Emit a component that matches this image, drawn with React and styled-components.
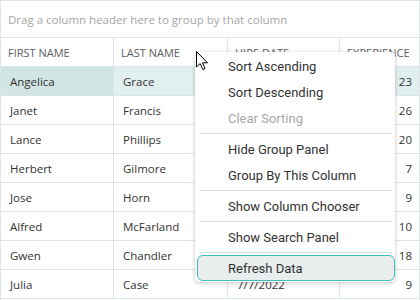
import React from "react";
import styled, { createGlobalStyle } from "styled-components";

const GlobalStyle = createGlobalStyle`
  html, body { margin: 0; padding: 0; background: #fff; overflow: hidden; }
  * { box-sizing: border-box; }
`;

const Grid = styled.div`
  position: relative;
  width: 420px;
  height: 300px;
  border: 1px solid #dde6e6;
  border-bottom: none;
  overflow: hidden;
  font-family: "Open Sans", "Noto Sans", sans-serif;
  font-size: 11.5px;
  color: #333;
`;

const GroupPanel = styled.div`
  height: 37px;
  border-bottom: 1px solid #dde6e6;
  display: flex;
  align-items: center;
  padding-left: 7px;
  color: #a6a6a6;
`;

const Row = styled.div`
  display: grid;
  grid-template-columns: 113px 114px 112px 1fr;
  height: 29px;
  border-bottom: 1px solid #dde6e6;
`;

const Cell = styled.div`
  display: flex;
  align-items: center;
  justify-content: ${(p) => (p.$num ? "flex-end" : "flex-start")};
  padding: 0 7px 0 ${(p) => (p.$header ? 7 : 9)}px;
  border-right: ${(p) => (p.$last ? "none" : "1px solid #dde6e6")};
  background: ${(p) => (p.$focused ? "#d1e5e4" : p.$selected ? "#e1efef" : "transparent")};
  color: ${(p) => (p.$header ? "#5e5e5e" : "#333")};
  font-size: ${(p) => (p.$header ? "11px" : "inherit")};
  white-space: nowrap;
  overflow: hidden;
`;

const Menu = styled.div`
  position: absolute;
  left: 194px;
  top: 51px;
  width: 200px;
  padding: 1px 0;
  background: #fff;
  border-radius: 4px;
  box-shadow: 0 1px 4px rgba(0, 0, 0, 0.22), 0 0 1px rgba(0, 0, 0, 0.15);
  font-family: "Roboto", "Inter", sans-serif;
  font-size: 13px;
`;

const Item = styled.div`
  height: 26px;
  display: flex;
  align-items: center;
  padding-left: ${(p) => (p.$focused ? 30 : 33)}px;
  margin-left: ${(p) => (p.$focused ? 2 : 0)}px;
  color: ${(p) => (p.$disabled ? "#a8a8a8" : "#333")};
  background: ${(p) => (p.$focused ? "#e8eded" : "transparent")};
  border: ${(p) => (p.$focused ? "1px solid #3dbfbf" : "none")};
  border-radius: 6px;
  white-space: nowrap;
`;

const Separator = styled.div`
  height: 1px;
  margin: 2px 2px 2px 4px;
  background: #d3e0e0;
`;

const Cursor = styled.svg`
  position: absolute;
  left: 195px;
  top: 50px;
`;

const rows = [
  ["Angelica", "Grace", "", 23],
  ["Janet", "Francis", "", 26],
  ["Lance", "Phillips", "", 20],
  ["Herbert", "Gilmore", "", 7],
  ["Jose", "Horn", "", 9],
  ["Alfred", "McFarland", "", 10],
  ["Gwen", "Chandler", "", 18],
  ["Julia", "Case", "7/7/2022", 9],
];

const items = [
  { t: "Sort Ascending" },
  { t: "Sort Descending" },
  { t: "Clear Sorting", disabled: true },
  { sep: true },
  { t: "Hide Group Panel" },
  { t: "Group By This Column" },
  { sep: true },
  { t: "Show Column Chooser" },
  { sep: true },
  { t: "Show Search Panel" },
  { sep: true },
  { t: "Refresh Data", focused: true },
];

export default function App() {
  return (
    <>
      <GlobalStyle />
      <Grid>
        <GroupPanel>Drag a column header here to group by that column</GroupPanel>
        <Row>
          <Cell $header>FIRST NAME</Cell>
          <Cell $header>LAST NAME</Cell>
          <Cell $header>HIRE DATE</Cell>
          <Cell $header $last>EXPERIENCE</Cell>
        </Row>
        {rows.map((r, i) => (
          <Row key={i}>
            <Cell $focused={i === 0}>{r[0]}</Cell>
            <Cell $selected={i === 0}>{r[1]}</Cell>
            <Cell $selected={i === 0}>{r[2]}</Cell>
            <Cell $selected={i === 0} $num $last>{r[3]}</Cell>
          </Row>
        ))}
        <Menu>
          {items.map((it, i) =>
            it.sep ? (
              <Separator key={i} />
            ) : (
              <Item key={i} $disabled={it.disabled} $focused={it.focused}>
                {it.t}
              </Item>
            )
          )}
        </Menu>
        <Cursor width="13" height="20" viewBox="0 0 13 20">
          <path
            d="M0.5 0.5 L0.5 16 L4.2 12.6 L6.8 18.6 L9 17.6 L6.5 11.8 L11.5 11.8 Z"
            fill="#fff"
            stroke="#000"
            strokeWidth="1"
            strokeLinejoin="miter"
          />
        </Cursor>
      </Grid>
    </>
  );
}
